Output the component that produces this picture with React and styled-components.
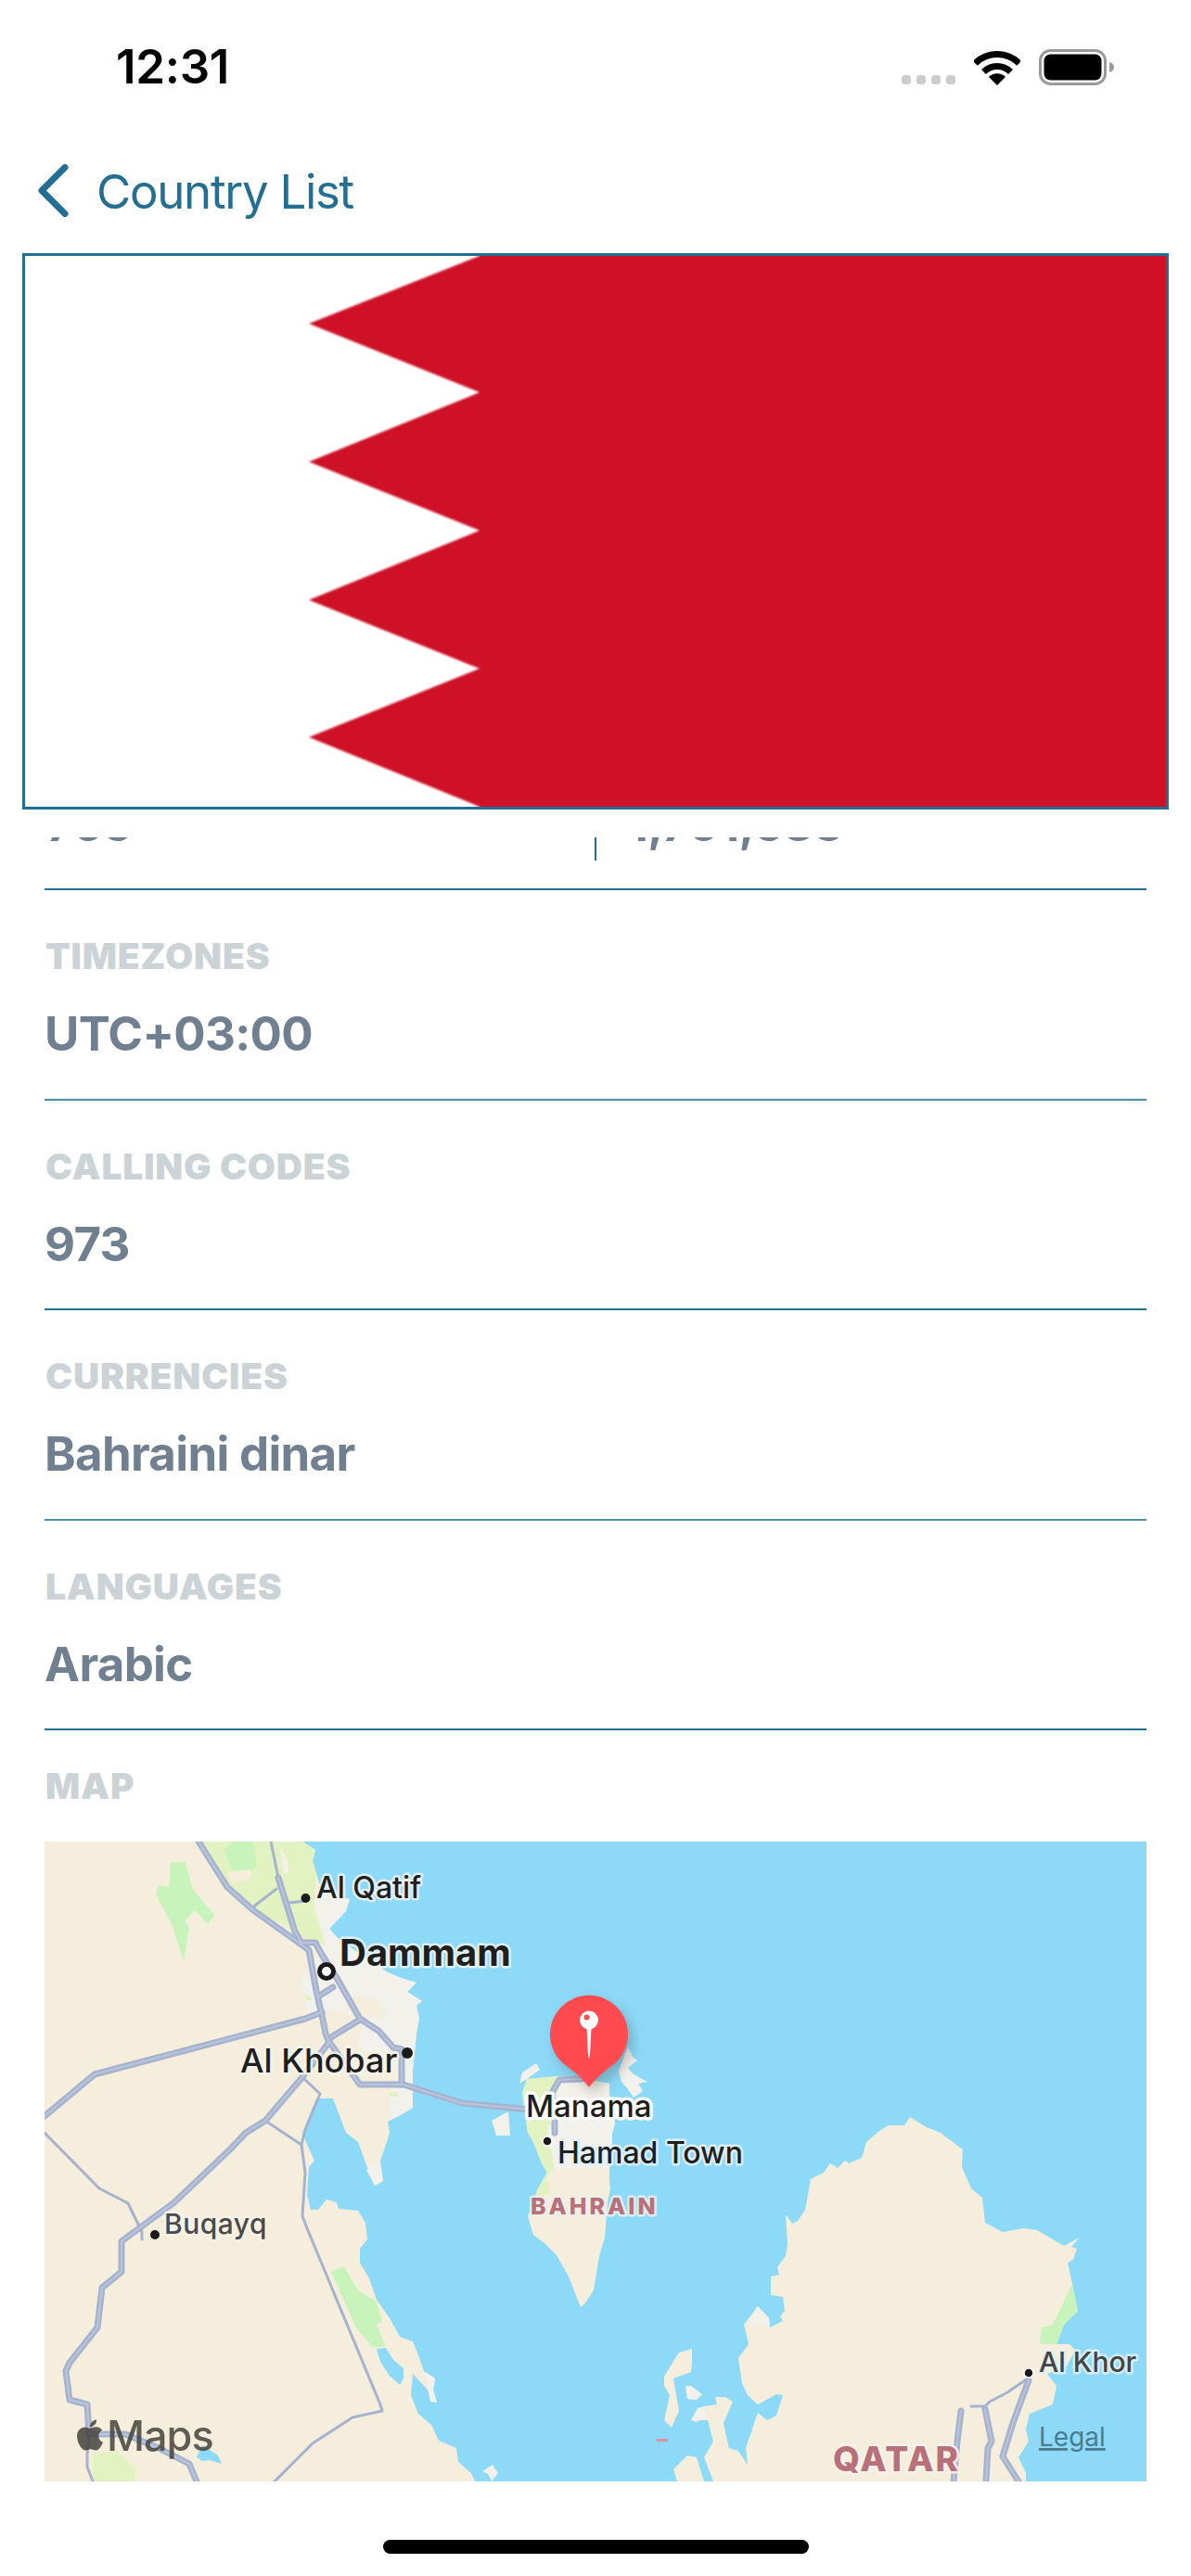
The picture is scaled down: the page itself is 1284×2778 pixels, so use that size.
import React from 'react';
import styled, { createGlobalStyle } from 'styled-components';
import { FaApple } from 'react-icons/fa';

const INK = '#236f94';
const SLATE = '#708090';
const FONT = 'Inter, "Liberation Sans", sans-serif';

const Global = createGlobalStyle`
  html, body { margin: 0; padding: 0; background: #fff; }
  * { box-sizing: border-box; }
`;

const Page = styled.div`
  width: 1284px;
  height: 2778px;
  overflow: hidden;
  background: #fff;
  display: flex;
  flex-direction: column;
  font-family: ${FONT};
`;

const StatusBar = styled.div`
  height: 177px;
  flex: none;
  display: flex;
  justify-content: space-between;
  align-items: flex-start;
  padding: 42px 82px 0 125px;
`;
const Clock = styled.div`
  font-size: 51px;
  line-height: 60px;
  font-weight: 600;
  letter-spacing: -0.3px;
  color: #000;
`;
const StatusIcons = styled.div`
  display: flex;
  align-items: flex-end;
  height: 39px;
  margin-top: 11px;
  gap: 20px;
`;
const SignalDots = styled.div`
  display: flex;
  gap: 6px;
  padding-bottom: 1px;
`;
const SignalDot = styled.span`
  width: 10px;
  height: 10px;
  border-radius: 3.5px;
  background: #cdcdcd;
`;
const IconSvg = styled.svg`
  display: block;
  flex: none;
`;

const NavBar = styled.div`
  height: 96px;
  flex: none;
  display: flex;
  align-items: flex-start;
  gap: 30px;
  padding-left: 41px;
  color: ${INK};
`;
const BackTitle = styled.div`
  font-size: 51px;
  line-height: 60px;
  font-weight: 400;
  letter-spacing: -1.3px;
`;

const FlagFrame = styled.div`
  flex: none;
  width: 1236px;
  height: 600px;
  margin: 0 24px;
  border: 3px solid ${INK};
  background: #fff;
`;
const FlagArt = styled.svg`
  display: block;
  width: 100%;
  height: 100%;
`;
const FlagField = styled.polygon`
  fill: #ce1126;
  filter: blur(0.8px);
`;

const Scroller = styled.div`
  flex: none;
  margin-top: 30px;
  padding: 0 48px;
  overflow: hidden;
`;
const Row = styled.div`
  height: 226.5px;
  padding-top: 48px;
  border-bottom: 2px solid ${(p) => (p.$thin ? '#4f8cab' : INK)};
`;
const SplitRow = styled(Row)`
  display: flex;
  align-items: flex-start;
  padding-top: 0;
  margin-top: -169.5px;
`;
const SplitCell = styled.div`
  height: 194.5px;
  padding-top: 125px;
  width: ${(p) => (p.$second ? 'auto' : '593px')};
  padding-left: ${(p) => (p.$second ? '34px' : '2px')};
  border-left: ${(p) => (p.$second ? `2px solid ${INK}` : 'none')};
`;
const Label = styled.div`
  font-size: 39px;
  line-height: 46px;
  font-weight: 900;
  letter-spacing: 0.8px;
  color: #cbd3d7;
  margin-left: 1px;
`;
const Value = styled.div`
  font-size: 51px;
  line-height: 60px;
  font-weight: 700;
  letter-spacing: -0.7px;
  color: ${SLATE};
  margin-top: ${(p) => (p.$flush ? '0' : '31px')};
`;
const MapSection = styled.div`
  padding-top: 37px;
`;
const MapFrame = styled.div`
  width: 1188px;
  height: 690px;
  margin-top: 37px;
  background: #8cdaf8;
`;
const MapArt = styled.svg`
  display: block;
  width: 1188px;
  height: 690px;
`;
const Area = styled.polygon`
  fill: ${(p) => p.$fill};
`;
const Way = styled.polyline`
  fill: none;
  stroke: ${(p) => p.$color || '#a6b3cf'};
  stroke-width: ${(p) => p.$w || 3}px;
  stroke-linejoin: round;
  stroke-linecap: round;
`;
const MapLabel = styled.text`
  font-family: ${FONT};
  font-size: ${(p) => p.$size}px;
  font-weight: ${(p) => p.$weight || 500};
  letter-spacing: ${(p) => p.$track || 0}px;
  fill: ${(p) => p.$color || '#1f1f1f'};
  stroke: ${(p) => p.$halo || 'rgba(245,243,235,.9)'};
  stroke-width: ${(p) => p.$haloW ?? 5}px;
  stroke-linejoin: round;
  paint-order: stroke;
`;
const MapsMark = styled.text`
  font-family: ${FONT};
  font-size: 45px;
  font-weight: 500;
  letter-spacing: -1px;
  fill: #45433d;
  opacity: 0.85;
`;
const LegalLink = styled.text`
  font-family: ${FONT};
  font-size: 28px;
  font-weight: 400;
  fill: #4a7c90;
  text-decoration: underline;
`;
const PinGroup = styled.g`
  filter: drop-shadow(5px 7px 7px rgba(60, 60, 60, 0.3));
`;
const HomeBar = styled.div`
  flex: none;
  width: 459px;
  height: 15px;
  margin: 63px 0 0 413px;
  border-radius: 8px;
  background: #000;
`;

const LAND = '#f5eedc';
const SEA = '#8cdaf8';
const URBAN = '#f2f1ec';
const GREEN = '#c8f3bb';
const LIME = '#e2f2c0';

const areas = [
  [LAND, '48,1986 326,1986 340,1995 337,2007 341,2020 347,2040 377,2048 373,2061 355,2080 367,2093 418,2127 432,2133 449,2138 439,2148 455,2158 449,2163 452,2177 449,2193 445,2233 445,2273 428,2283 418,2288 420,2300 416,2313 410,2330 413,2352 404,2357 400,2347 394,2332 386,2310 373,2300 359,2263 341,2263 326,2300 333,2317 339,2330 333,2337 331,2367 335,2383 343,2383 352,2372 363,2375 365,2382 386,2384 394,2397 396,2415 388,2425 388,2440 398,2457 406,2480 420,2500 431,2520 445,2525 451,2540 457,2557 469,2565 467,2577 471,2591 459,2575 445,2560 443,2583 451,2603 465,2615 473,2632 492,2640 494,2655 508,2667 512,2676 48,2676'],
  [SEA, '406,2533 416,2532 424,2545 435,2554 435,2565 431,2572 420,2562 410,2547'],
  [SEA, '212,2650 218,2637 226,2642 235,2648 239,2657 226,2653 218,2654'],
  [LIME, '212,1986 326,1986 340,1995 337,2007 341,2020 339,2057 351,2097 333,2093 300,2073 277,2063 249,2037 228,2007'],
  [GREEN, '241,1995 251,1986 273,1986 277,2013 272,2017 250,2017'],
  [LAND, '245,2020 270,2016 272,2026 250,2032'],
  [URBAN, '302,1992 310,2005 311,2020 305,2020'],
  [GREEN, '184,2008 200,2008 208,2037 231,2065 224,2075 210,2060 199,2072 204,2078 198,2115 186,2077 168,2043 171,2033 182,2035'],
  [URBAN, '340,2045 377,2048 373,2061 355,2080 367,2093 418,2127 432,2133 449,2138 439,2148 455,2158 449,2163 452,2177 449,2193 445,2233 445,2273 428,2283 420,2285 420,2255 428,2250 424,2212 392,2212 386,2203 392,2177 359,2167 330,2170 330,2150 324,2143 326,2133 351,2097 339,2057'],
  [LAND, '384,2152 408,2157 418,2175 392,2177 368,2165'],
  [LIME, '330,2150 338,2157 330,2157'],
  [LIME, '420,2256 428,2256 430,2261 419,2261'],
  [URBAN, '395,2340 403,2333 410,2335 413,2352 404,2357'],
  [GREEN, '357,2450 371,2444 386,2470 406,2482 412,2503 406,2507 416,2530 402,2532 384,2510'],
  [LIME, '100,2647 126,2643 145,2662 145,2676 100,2676'],
  [URBAN, '520,2665 531,2658 537,2667 530,2676 526,2668'],
  [URBAN, '457,2557 469,2565 467,2577 471,2591 464,2590 460,2570'],

  [LAND, '568,2242 603,2239 630,2242 657,2247 657,2258 663,2290 660,2300 660,2310 657,2338 657,2350 658,2360 655,2375 652,2413 646,2433 640,2470 630,2485 626,2488 620,2473 613,2455 600,2432 588,2420 575,2410 569,2390 580,2360 590,2343 584,2333 575,2310 569,2300 567,2287 563,2257'],
  [LIME, '568,2242 603,2239 600,2263 590,2300 598,2338 590,2348 593,2365 580,2372 572,2385 580,2360 590,2343 584,2333 575,2310 569,2300 567,2287 563,2257'],
  [URBAN, '603,2239 630,2242 657,2247 657,2258 663,2290 660,2300 660,2310 657,2338 598,2338 590,2300 600,2263'],
  [URBAN, '667,2233 677,2207 682,2218 687,2222 677,2230 683,2237 698,2245 688,2247 693,2255 683,2262 677,2253 670,2245'],
  [URBAN, '560,2247 563,2235 578,2225 582,2232 575,2237 568,2242'],
  [URBAN, '530,2287 548,2277 550,2303 535,2303'],

  [LAND, '769,2676 759,2650 769,2633 763,2610 745,2610 759,2595 773,2593 771,2585 782,2585 790,2590 780,2613 782,2623 786,2640 796,2643 806,2658 804,2640 817,2602 827,2610 837,2605 844,2583 837,2582 817,2593 806,2583 800,2570 796,2543 807,2528 802,2507 817,2487 829,2500 830,2510 844,2503 841,2498 846,2492 844,2477 831,2475 831,2455 840,2453 838,2445 847,2433 849,2420 847,2388 854,2398 860,2395 868,2383 874,2350 888,2343 895,2333 903,2338 911,2330 915,2333 929,2327 934,2310 948,2298 958,2292 975,2292 981,2283 997,2293 1014,2300 1038,2318 1037,2337 1047,2360 1059,2370 1062,2397 1081,2407 1104,2403 1118,2405 1147,2422 1164,2413 1155,2423 1161,2425 1157,2437 1151,2440 1156,2463 1162,2492 1147,2507 1139,2528 1153,2528 1159,2534 1150,2552 1129,2560 1139,2573 1135,2593 1110,2603 1106,2620 1109,2633 1098,2650 1106,2667 1106,2676'],
  [GREEN, '1156,2463 1162,2492 1147,2507 1139,2528 1121,2528 1123,2510 1135,2507'],
  [LAND, '726,2663 741,2648 751,2650 759,2676 730,2676'],
  [LAND, '716,2563 728,2543 732,2537 746,2533 746,2547 745,2558 726,2565 732,2600 724,2618 716,2610 722,2583 716,2573'],
  [URBAN, '739,2573 745,2573 757,2582 751,2588 741,2587'],
  [URBAN, '745,2610 752,2597 759,2595 762,2607 750,2612'],
  [URBAN, '816,2487 829,2500 830,2510 818,2505 806,2510'],
];

const thinWays = [
  '292,1986 300,2025 318,2083',
  '271,2058 298,2037',
  '312,2052 329,2050',
  '326,2240 345,2258 329,2297 325,2313',
  '286,2287 325,2313',
  '325,2313 329,2343 326,2390 331,2403 410,2593 412,2600 380,2607 337,2635 296,2676',
  '48,2300 107,2360 138,2376 153,2407 153,2415',
  '96,2625 94,2647 94,2660 100,2676',
  '1108,2565 1086,2580 1067,2590 1062,2595 1047,2595',
];
const mainWays = [
  '214,1986 245,2035 273,2060 322,2095 333,2103 341,2147 347,2173 351,2193 355,2203',
  '300,2025 318,2083 326,2097',
  '322,2095 340,2095 347,2108 363,2133 388,2177 408,2190 424,2208 433,2210 433,2248',
  '48,2282 102,2237 329,2177 347,2170',
  '343,2153 359,2143',
  '357,2197 388,2178',
  '355,2202 326,2240 286,2287 265,2300 249,2317 188,2375 131,2417 131,2450 110,2467 105,2510 75,2548 71,2557 75,2588 94,2593 96,2625 135,2625 171,2640 204,2657 212,2676',
  '355,2202 388,2248 435,2248 498,2268 571,2275',
  '598,2300 598,2287 595,2257 603,2243 627,2242',
  '1109,2567 1092,2613 1081,2649 1098,2676',
  '1062,2598 1069,2633 1065,2640 1063,2676',
  '1036,2600 1032,2633 1028,2676',
];

function MapDrawing() {
  return (
    <MapArt viewBox="48 1986 1188 690">
      {areas.map(([fill, pts], i) => <Area key={i} $fill={fill} points={pts} />)}
      <rect x="708" y="2630" width="12" height="3" fill="#e58ea0" />
      {thinWays.map((pts, i) => <Way key={i} points={pts} />)}
      {mainWays.map((pts, i) => <Way key={i} points={pts} $w={7} />)}
      {mainWays.map((pts, i) => <Way key={i} points={pts} $w={2} $color="#bac5dc" />)}

      <circle cx="329.5" cy="2047" r="5" fill="#1a1a1a" />
      <circle cx="352" cy="2126" r="7.5" fill="#fff" stroke="#1a1a1a" strokeWidth="5" />
      <circle cx="439" cy="2214" r="6" fill="#1a1a1a" />
      <circle cx="590" cy="2309" r="5" fill="#1a1a1a" stroke="#fff" strokeWidth="1.5" />
      <circle cx="167" cy="2410" r="5" fill="#1a1a1a" />
      <circle cx="1109" cy="2559" r="5" fill="#1a1a1a" stroke="#fff" strokeWidth="1.5" />

      <MapLabel x="341" y="2047" $size={32} $halo="rgba(240,244,240,.85)">Al Qatif</MapLabel>
      <MapLabel x="366" y="2120" $size={40} $weight={700} $halo="rgba(240,244,240,.85)">Dammam</MapLabel>
      <MapLabel x="259" y="2235" $size={36}>Al Khobar</MapLabel>
      <MapLabel x="567" y="2283" $size={33} $halo="#fff" $haloW={7}>Manama</MapLabel>
      <MapLabel x="601" y="2333" $size={32} $halo="rgba(225,240,248,.95)">Hamad Town</MapLabel>
      <MapLabel x="572" y="2388" $size={25} $weight={800} $track={3} $color="#b8707a" $halo="rgba(235,240,240,.85)">BAHRAIN</MapLabel>
      <MapLabel x="177" y="2409" $size={30} $track={0.5} $color="#4a4a4a">Buqayq</MapLabel>
      <MapLabel x="1120" y="2558" $size={30} $color="#444" $halo="rgba(225,240,245,.9)">Al Khor</MapLabel>
      <MapLabel x="898" y="2665" $size={37} $weight={800} $track={2} $color="#b8707a">QATAR</MapLabel>

      <PinGroup>
        <path d="M612 2229 A42 42 0 1 1 658 2229 Q645 2238 635 2251 Q625 2238 612 2229 Z" fill="#ff4b4f" />
        <path d="M632.5 2186 L637.5 2186 L636 2216 L635 2220 L634 2216 Z" fill="#fff" />
        <circle cx="635" cy="2178.5" r="10" fill="#fff" />
        <circle cx="632.5" cy="2175.5" r="3" fill="#ff4b4f" />
      </PinGroup>

      <FaApple x="78" y="2607" size={38} color="#45433d" opacity="0.85" />
      <MapsMark x="115" y="2643">Maps</MapsMark>
      <LegalLink x="1120" y="2638">Legal</LegalLink>
    </MapArt>
  );
}

const facts = [
  { label: 'TIMEZONES', value: 'UTC+03:00', thin: true },
  { label: 'CALLING CODES', value: '973' },
  { label: 'CURRENCIES', value: 'Bahraini dinar', thin: true },
  { label: 'LANGUAGES', value: 'Arabic' },
];

export default function App() {
  return (
    <Page>
      <Global />
      <StatusBar>
        <Clock>12:31</Clock>
        <StatusIcons>
          <SignalDots>
            <SignalDot /><SignalDot /><SignalDot /><SignalDot />
          </SignalDots>
          <IconSvg width="50" height="37" viewBox="0 0 50 37">
            <path d="M1.3 13.3 A33.5 33.5 0 0 1 48.7 13.3" fill="none" stroke="#000" strokeWidth="7" />
            <path d="M10.5 22.5 A20.5 20.5 0 0 1 39.5 22.5" fill="none" stroke="#000" strokeWidth="7" />
            <path d="M25 37 L16 28 A12.7 12.7 0 0 1 34 28 Z" fill="#000" />
          </IconSvg>
          <IconSvg width="82" height="39" viewBox="0 0 82 39">
            <rect x="1.5" y="1.5" width="70" height="36" rx="11" fill="none" stroke="#999" strokeWidth="3" />
            <rect x="5.5" y="5.5" width="62" height="28" rx="7" fill="#000" />
            <path d="M76 14 C80 15 81 17.5 81 19.5 C81 21.5 80 24 76 25 Z" fill="#999" />
          </IconSvg>
        </StatusIcons>
      </StatusBar>

      <NavBar>
        <IconSvg width="33" height="57" viewBox="0 0 33 57">
          <path d="M29 3.5 L4 28.5 L29 53.5" fill="none" stroke={INK} strokeWidth="7" strokeLinecap="round" strokeLinejoin="round" />
        </IconSvg>
        <BackTitle>Country List</BackTitle>
      </NavBar>

      <FlagFrame>
        <FlagArt viewBox="0 0 1230 594" preserveAspectRatio="none">
          <FlagField points="490,-10 1240,-10 1240,604 490,604 490,594 306,519 490,445 306,371 490,296 306,222 490,147 306,73 490,0" />
        </FlagArt>
      </FlagFrame>

      <Scroller>
        <SplitRow>
          <SplitCell><Value $flush>765</Value></SplitCell>
          <SplitCell $second><Value $flush>1,701,583</Value></SplitCell>
        </SplitRow>
        {facts.map((f) => (
          <Row key={f.label} $thin={f.thin}>
            <Label>{f.label}</Label>
            <Value>{f.value}</Value>
          </Row>
        ))}
        <MapSection>
          <Label>MAP</Label>
          <MapFrame><MapDrawing /></MapFrame>
        </MapSection>
      </Scroller>

      <HomeBar />
    </Page>
  );
}
